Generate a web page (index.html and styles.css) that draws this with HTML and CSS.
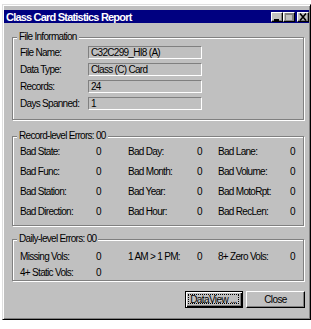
FILE: index.html
```html
<!DOCTYPE html>
<html lang="en">
  <head>
    <meta charset="UTF-8" />
    <title>Class Card Statistics Report</title>
    <link rel="stylesheet" href="styles.css">
  </head>
  <body>
    <div class="window">
      <div class="titlebar">
        <span class="title">Class Card Statistics Report</span>
        <div class="controls">
          <span class="ctl">
            <svg width="10" height="8" viewBox="0 0 10 8"><rect x="2" y="6" width="5" height="2" fill="#000"/></svg>
          </span>
          <span class="ctl">
            <svg width="10" height="8" viewBox="0 0 10 8"><rect x="1.5" y="0.5" width="7" height="7" fill="none" stroke="#808080"/><rect x="1" y="0" width="8" height="2" fill="#808080"/></svg>
          </span>
          <span class="ctl ctl-close">
            <svg width="10" height="8" viewBox="0 0 10 8"><path d="M2 0.5 L8 7.5 M8 0.5 L2 7.5" stroke="#000" stroke-width="1.6"/></svg>
          </span>
        </div>
      </div>

      <div class="client">
        <div class="group group-file">
          <span class="legend">File Information</span>
          <div class="field-row">
            <span class="label">File Name:</span>
            <span class="field">C32C299_HI8 (A)</span>
          </div>
          <div class="field-row">
            <span class="label">Data Type:</span>
            <span class="field">Class (C) Card</span>
          </div>
          <div class="field-row">
            <span class="label">Records:</span>
            <span class="field">24</span>
          </div>
          <div class="field-row">
            <span class="label">Days Spanned:</span>
            <span class="field">1</span>
          </div>
        </div>

        <div class="group group-record">
          <span class="legend">Record-level Errors: 00</span>
          <div class="stats">
            <span>Bad State:</span><span>0</span>
            <span>Bad Day:</span><span>0</span>
            <span>Bad Lane:</span><span>0</span>

            <span>Bad Func:</span><span>0</span>
            <span>Bad Month:</span><span>0</span>
            <span>Bad Volume:</span><span>0</span>

            <span>Bad Station:</span><span>0</span>
            <span>Bad Year:</span><span>0</span>
            <span>Bad MotoRpt:</span><span>0</span>

            <span>Bad Direction:</span><span>0</span>
            <span>Bad Hour:</span><span>0</span>
            <span>Bad RecLen:</span><span>0</span>
          </div>
        </div>

        <div class="group group-daily">
          <span class="legend">Daily-level Errors: 00</span>
          <div class="stats stats-daily">
            <span>Missing Vols:</span><span>0</span>
            <span>1 AM &gt; 1 PM:</span><span>0</span>
            <span>8+ Zero Vols:</span><span>0</span>

            <span>4+ Static Vols:</span><span>0</span>
          </div>
        </div>

        <div class="buttons">
          <button class="btn btn-default"><span class="focus">DataView ...</span></button>
          <button class="btn">Close</button>
        </div>
      </div>
    </div>
  </body>
</html>
```

FILE: styles.css
```css
body {
  margin: 0;
  background-color: #fff;
  font-family: "Liberation Sans", Arial, sans-serif;
  font-size: 10px;
  letter-spacing: -0.7px;
  color: #000;
}
.window {
  margin: 4px 0 0 2px;
  width: 309px;
  height: 316px;
  box-sizing: border-box;
  padding: 5px 1px 1px 1px;
  background-color: #c0c0c0;
  border: 1px solid;
  border-color: #dfdfdf #000 #000 #dfdfdf;
  box-shadow: inset 1px 1px #fff, inset -1px -1px #808080;
}
.titlebar {
  height: 13px;
  background-color: #000080;
  display: flex;
  align-items: center;
  justify-content: space-between;
  padding-left: 2px;
}
.title {
  color: #fff;
  font-weight: bold;
  font-size: 11px;
  letter-spacing: -0.8px;
}
.controls {
  display: flex;
  align-items: center;
}
.ctl {
  width: 12px;
  height: 10px;
  box-sizing: border-box;
  background-color: #c0c0c0;
  border: 1px solid;
  border-color: #fff #000 #000 #fff;
  box-shadow: inset -1px -1px #808080;
  display: flex;
  align-items: center;
  justify-content: center;
}
.ctl-close {
  margin-left: 2px;
}
.client {
  display: flex;
  flex-direction: column;
}
.group {
  position: relative;
  margin: 0 5px 0 8px;
  border: 1px solid #808080;
  box-shadow: inset 1px 1px #fff, 1px 1px #fff;
  padding-left: 7px;
}
.legend {
  position: absolute;
  top: -7px;
  left: 4px;
  padding: 0 2px;
  background-color: #c0c0c0;
  line-height: 12px;
}
.group-file {
  margin-top: 14px;
  padding-top: 8px;
  padding-bottom: 9px;
  display: flex;
  flex-direction: column;
  gap: 4px;
}
.field-row {
  display: flex;
  align-items: center;
}
.label {
  width: 68px;
}
.field {
  width: 114px;
  height: 13px;
  box-sizing: border-box;
  padding-left: 2px;
  line-height: 11px;
  border: 1px solid;
  border-color: #808080 #fff #fff #808080;
}
.group-record {
  margin-top: 16px;
  padding-top: 4px;
  padding-bottom: 4px;
}
.stats {
  display: grid;
  grid-template-columns: 76px 32px 69px 21px 72px 1fr;
  grid-auto-rows: 20px;
  align-items: center;
}
.group-daily {
  margin-top: 13px;
  padding-top: 8px;
  padding-bottom: 0;
}
.stats-daily {
  grid-auto-rows: 16px;
}
.buttons {
  display: flex;
  justify-content: flex-end;
  gap: 3px;
  margin: 10px 4px 0 0;
}
.btn {
  width: 59px;
  height: 17px;
  box-sizing: border-box;
  padding: 0;
  font-family: inherit;
  font-size: 10px;
  letter-spacing: -0.6px;
  color: #000;
  background-color: #c0c0c0;
  border: 1px solid;
  border-color: #fff #000 #000 #fff;
  box-shadow: inset -1px -1px #808080;
}
.btn-default {
  width: 58px;
  border-color: #000;
  box-shadow: inset 1px 1px #fff, inset -1px -1px #000, inset -2px -2px #808080;
  display: flex;
  align-items: stretch;
  padding: 2px 3px 3px 2px;
}
.focus {
  flex: 1;
  border: 1px dotted #000;
  display: flex;
  align-items: center;
  justify-content: center;
}
```
